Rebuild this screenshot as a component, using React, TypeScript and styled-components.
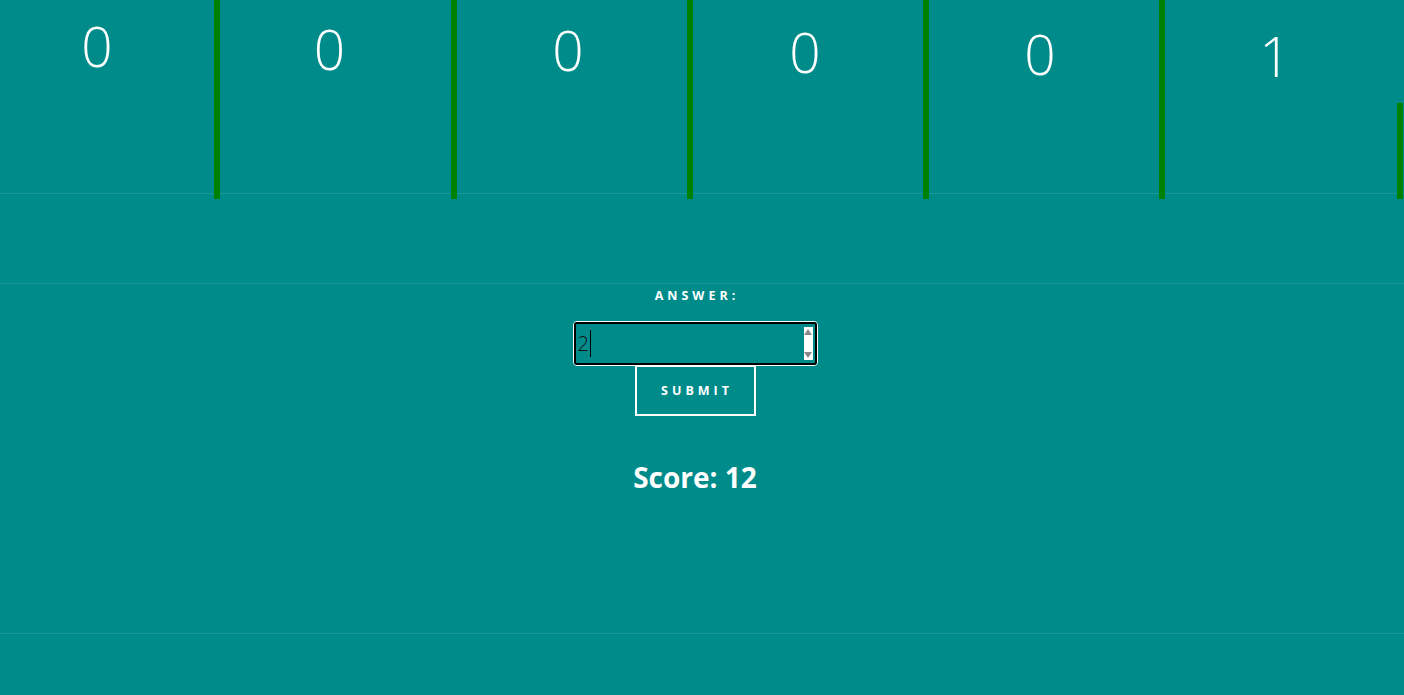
import React from "react";
import styled, { createGlobalStyle } from "styled-components";

const GlobalStyle = createGlobalStyle`
  html, body {
    margin: 0;
    padding: 0;
    background: #008b8b;
    overflow: hidden;
  }
  body {
    font-family: "Open Sans", "Liberation Sans", sans-serif;
    color: #ffffff;
  }
`;

const Page = styled.div`
  width: 1404px;
  height: 695px;
  background: #008b8b;
  display: flex;
  flex-direction: column;
`;

const Section = styled.section<{ $h: number }>`
  height: ${(p) => p.$h}px;
  flex: none;
  border-bottom: 1px solid #1b9797;
  box-sizing: border-box;
`;

const Columns = styled.div`
  display: flex;
  align-items: flex-start;
  height: 199px;
  position: relative;
  z-index: 1;
`;

const Column = styled.div<{ $w: number }>`
  width: ${(p) => p.$w}px;
  height: 199px;
  display: flex;
  justify-content: center;
  flex: none;
`;

const Digit = styled.div`
  font-family: "Open Sans", "Liberation Sans", sans-serif;
  font-weight: 300;
  font-size: 55px;
  line-height: 56px;
  color: #ffffff;
  height: 56px;
`;

const Bar = styled.div<{ $h: number }>`
  width: 6px;
  height: ${(p) => p.$h}px;
  background: #008000;
  flex: none;
  align-self: flex-end;
`;

const FormArea = styled.div`
  display: flex;
  flex-direction: column;
  align-items: center;
  padding-right: 14px;
  padding-top: 3px;
`;

const Label = styled.label`
  font-family: "Open Sans", "Liberation Sans", sans-serif;
  font-weight: 700;
  font-size: 12.5px;
  letter-spacing: 4px;
  line-height: 17px;
  margin-left: 4px;
  color: #ffffff;
`;

const Field = styled.div`
  margin-top: 17px;
  width: 245px;
  height: 45px;
  box-sizing: border-box;
  border: 1px solid #ffffff;
  border-radius: 4px;
  display: flex;
`;

const FieldInner = styled.div`
  flex: 1;
  border: 2px solid #000000;
  border-radius: 3px;
  display: flex;
  align-items: center;
  padding-left: 2px;
  padding-right: 2px;
`;

const Value = styled.span`
  font-family: "Open Sans", "Liberation Sans", sans-serif;
  font-weight: 300;
  font-size: 20px;
  color: #111111;
  line-height: 26px;
`;

const Caret = styled.span`
  width: 1px;
  height: 27px;
  background: #000000;
  margin-left: 1px;
`;

const Spacer = styled.div`
  flex: 1;
`;

const Spinner = styled.div`
  width: 9px;
  height: 33px;
  background: #ffffff;
  display: flex;
  flex-direction: column;
  justify-content: space-between;
  align-items: center;
  padding: 2px 0;
  box-sizing: border-box;
`;

const Submit = styled.button`
  width: 121px;
  height: 51px;
  margin-top: -1px;
  background: transparent;
  border: 2px solid #ffffff;
  color: #ffffff;
  font-family: "Open Sans", "Liberation Sans", sans-serif;
  font-weight: 700;
  font-size: 12.5px;
  letter-spacing: 4px;
  padding: 0 0 0 4px;
  cursor: pointer;
`;

const Score = styled.h2`
  margin: 43px 0 0;
  font-family: "Open Sans", "Liberation Sans", sans-serif;
  font-weight: 700;
  font-size: 28px;
  line-height: 36px;
  color: #ffffff;
`;

const cells = [
  { w: 214, d: "0", dx: -10, dy: 18, bar: 199 },
  { w: 231, d: "0", dx: -6, dy: 21, bar: 199 },
  { w: 230, d: "0", dx: -4, dy: 22, bar: 199 },
  { w: 230, d: "0", dx: -3, dy: 24, bar: 199 },
  { w: 230, d: "0", dx: -4, dy: 26, bar: 199 },
  { w: 232, d: "1", dx: -6, dy: 28, bar: 96 },
];

const Arrow = ({ up }: { up?: boolean }) => (
  <svg width="8" height="6" viewBox="0 0 8 6">
    <path d={up ? "M4 0 L8 6 L0 6 Z" : "M0 0 L8 0 L4 6 Z"} fill="#8a8a8a" />
  </svg>
);

export default function App() {
  return (
    <>
      <GlobalStyle />
      <Page>
        <Section $h={194}>
          <Columns>
            {cells.map((c, i) => (
              <React.Fragment key={i}>
                <Column $w={c.w}>
                  <Digit style={{ transform: `translate(${c.dx}px, ${c.dy}px)` }}>{c.d}</Digit>
                </Column>
                <Bar $h={c.bar} />
              </React.Fragment>
            ))}
          </Columns>
        </Section>
        <Section $h={90} />
        <Section $h={350}>
          <FormArea>
            <Label>ANSWER:</Label>
            <Field>
              <FieldInner>
                <Value>2</Value>
                <Caret />
                <Spacer />
                <Spinner>
                  <Arrow up />
                  <Arrow />
                </Spinner>
              </FieldInner>
            </Field>
            <Submit>SUBMIT</Submit>
            <Score>Score: 12</Score>
          </FormArea>
        </Section>
      </Page>
    </>
  );
}
